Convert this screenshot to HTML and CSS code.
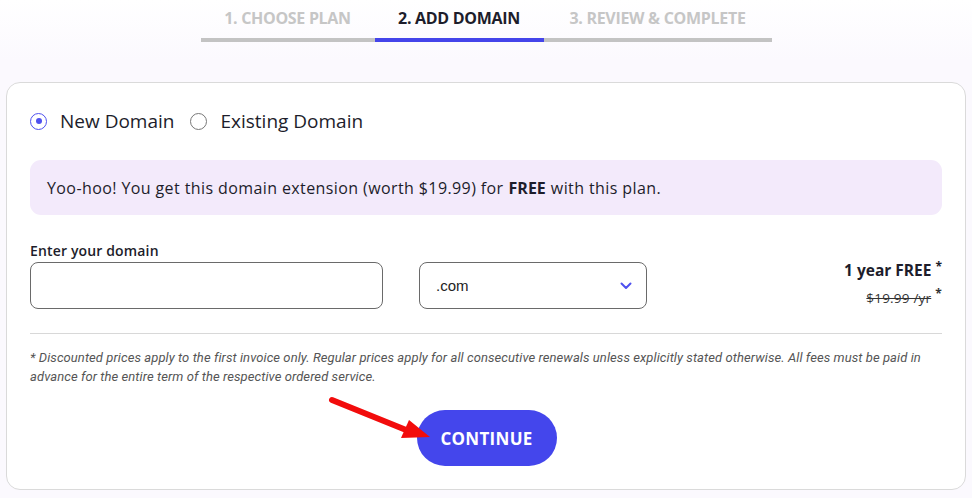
FILE: index.html
```html
<!DOCTYPE html>
<html>
<head>
<meta charset="utf-8">
<link rel="stylesheet" href="styles.css">
</head>
<body>
<nav class="steps">
  <div class="step s1">1. CHOOSE PLAN</div>
  <div class="step s2 active">2. ADD DOMAIN</div>
  <div class="step s3">3. REVIEW &amp; COMPLETE</div>
</nav>
<main class="card">
  <div class="radios">
    <label class="radio"><span class="dot on"></span>New Domain</label>
    <label class="radio"><span class="dot"></span>Existing Domain</label>
  </div>
  <div class="banner">Yoo-hoo! You get this domain extension (worth $19.99) for <b>FREE</b> with this plan.</div>
  <div class="label">Enter your domain</div>
  <div class="fields">
    <div class="input"></div>
    <div class="select"><span>.com</span>
      <svg class="chev" width="12" height="8" viewBox="0 0 12 8"><path d="M1.5 1.5 L6 6 L10.5 1.5" fill="none" stroke="#4f51ef" stroke-width="2" stroke-linecap="round" stroke-linejoin="round"/></svg>
    </div>
    <div class="price">
      <div class="free">1 year FREE<sup>*</sup></div>
      <div class="old"><s>$19.99 /yr</s><sup>*</sup></div>
    </div>
  </div>
  <hr class="rule">
  <p class="note">* Discounted prices apply to the first invoice only. Regular prices apply for all consecutive renewals unless explicitly stated otherwise. All fees must be paid in advance for the entire term of the respective ordered service.</p>
  <div class="actions">
    <button class="continue">CONTINUE</button>
  </div>
  <svg class="arrow" width="120" height="60" viewBox="0 0 120 60">
    <line x1="4" y1="4" x2="88" y2="38" stroke="#f20c0c" stroke-width="6" stroke-linecap="round"/>
    <polygon points="81,24 73,42 102,41" fill="#f20c0c"/>
  </svg>
</main>
</body>
</html>
```
FILE: styles.css
```css
html, body { margin: 0; padding: 0; }
body {
  font-family: "Open Sans", "DejaVu Sans", sans-serif;
  color: #1d1d2b;
  background: linear-gradient(#ffffff 0px, #fbf9fe 60px, #fbf9fe 100%);
  height: 498px;
  overflow: hidden;
}
.steps {
  display: flex;
  justify-content: center;
  padding-top: 6px;
}
.step {
  font-size: 16px;
  font-weight: 700;
  color: #c6c6c6;
  text-align: center;
  height: 32px;
  line-height: 24px;
  border-bottom: 4px solid #c3c3c3;
  letter-spacing: -0.3px;
}
.s1 { width: 174px; }
.s2 { width: 169px; }
.s3 { width: 228px; }
.step.active { color: #1d1d2b; border-bottom-color: #4444ea; }
.card {
  position: relative;
  margin: 40px 6px 0 6px;
  height: 408px;
  box-sizing: border-box;
  background: #fff;
  border: 1px solid #dadada;
  border-radius: 14px;
  padding: 24px 23px 0 23px;
}
.radios { display: flex; gap: 16px; height: 28px; align-items: center; }
.radio { display: flex; align-items: center; gap: 13px; font-size: 19px; color: #1d1d2b; }
.dot {
  width: 17px; height: 17px; box-sizing: border-box;
  border: 1.5px solid #777; border-radius: 50%;
  display: flex; align-items: center; justify-content: center;
}
.dot.on { border-color: #4f51ef; }
.dot.on::after { content: ""; width: 6px; height: 6px; border-radius: 50%; background: #4f51ef; }
.banner {
  margin-top: 25px;
  height: 55px;
  box-sizing: border-box;
  background: #f3eafb;
  border-radius: 11px;
  padding: 0 17px;
  display: flex; align-items: center;
  font-size: 16px;
  letter-spacing: 0.4px;
  white-space: nowrap;
}
.banner b { font-weight: 700; margin: 0 5px; letter-spacing: 0; }
.label { margin-top: 26px; font-size: 14px; font-weight: 600; line-height: 20px; letter-spacing: 0.15px; }
.fields { display: flex; align-items: flex-start; margin-top: 1px; }
.input {
  width: 353px; height: 47px; box-sizing: border-box;
  border: 1px solid #6a6a6a; border-radius: 8px;
}
.select {
  margin-left: 36px;
  width: 228px; height: 47px; box-sizing: border-box;
  border: 1px solid #6a6a6a; border-radius: 8px;
  display: flex; align-items: center; justify-content: space-between;
  padding: 0 14px 0 16px;
  font-family: "Liberation Sans", Arial, sans-serif;
  font-size: 15px; color: #222;
}
.price { margin-left: auto; text-align: right; }
.free { font-size: 15.5px; font-weight: 700; line-height: 20px; margin-top: -2px; }
.old { font-size: 13.5px; color: #333; margin-top: 8px; line-height: 20px; letter-spacing: 0.2px; }
.old s { text-decoration-thickness: 1px; }
sup { font-size: 12px; font-weight: 700; margin-left: 4px; vertical-align: 5px; line-height: 0; }
.rule { border: 0; border-top: 1px solid #d8d8d8; margin: 24px 0 0 0; }
.note {
  margin: 14px 0 0 0;
  font-family: Roboto, "Liberation Sans", sans-serif;
  font-style: italic;
  font-size: 13px;
  line-height: 19px;
  color: #555;
  letter-spacing: 0.08px;
}
.actions { display: flex; justify-content: center; margin-top: 24px; padding-left: 1px; }
.continue {
  width: 140px; height: 56px;
  border: 0; border-radius: 28px;
  background: #4446ec;
  color: #fff;
  font-family: "Open Sans", sans-serif;
  font-size: 17px; font-weight: 700;
  letter-spacing: 0.3px;
}
.arrow { position: absolute; left: 321px; top: 313px; }
```
